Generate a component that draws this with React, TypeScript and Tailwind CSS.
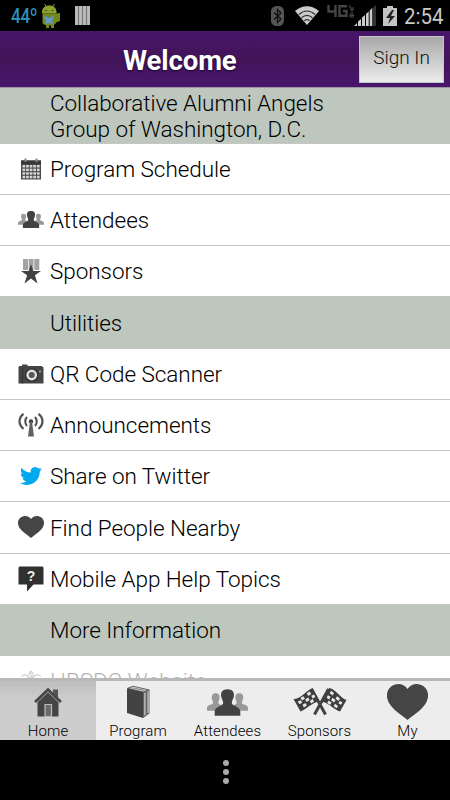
import React from 'react';
import { clsx } from 'clsx';

const CalendarIcon = () => (
    <svg viewBox="0 0 26 26" className="h-[26px] w-[26px]">
        <path d="M3 4.500h20V23.500H3z" fill="#4a4a4a" />
        <path d="M3 4.500h20v3.700H3z" fill="#383838" />
        <path d="M6.500 2.500h2v3.500h-2zM17.500 2.500h2v3.500h-2z" fill="#858585" />
        {[9, 12.6, 16.2, 19.8].map((y) =>
            [4.5, 8.1, 11.7, 15.3, 18.9].map((x) => (
                <rect key={`${x}-${y}`} x={x} y={y} width="2.7" height="2.5" fill="#d6d6d6" />
            ))
        )}
    </svg>
);

const PeopleIcon = ({ className }: { className: string }) => (
    <svg viewBox="0 0 40 26" className={className}>
        <g fill="#999">
            <path d="M8.500 4c3.500 0 4.300 2.600 3.600 5.800-.3 1.500-1.100 2.400-1.100 3.400 0 1.500 4 1.800 4 4.500V21H0v-2.700c0-3.500 6-2.900 6-5.100 0-1.100-.8-1.900-1.100-3.400C4.200 6.600 5 4 8.500 4z" />
            <path d="M31.500 4c3.500 0 4.300 2.600 3.600 5.800-.3 1.500-1.100 2.400-1.100 3.400 0 2.200 6 1.600 6 5.100V21H25v-3.300c0-2.700 4-3 4-4.500 0-1-.8-1.900-1.100-3.400C27.200 6.600 28 4 31.500 4z" />
        </g>
        <path
            d="M20 0c5 0 7 3 6.100 7.500-.4 2.400-1.900 3.700-1.900 6 0 3.200 8.300 3.300 8.300 8.300V26h-25v-4.200c0-5 8.300-5.100 8.300-8.300 0-2.300-1.500-3.600-1.900-6C13 3 15 0 20 0z"
            fill="#424242"
        />
    </svg>
);

const MedalIcon = () => (
    <svg viewBox="0 0 26 26" className="h-[26px] w-[26px]">
        <path d="M5 1h5v11H5zM10.700 1h4.800v11h-4.800zM16.300 1h5v11h-5z" fill="#a3a3a3" />
        <path d="M13 6l2.300 7h7.700l-6.100 4.300 2.600 8.200-6.500-5-6.500 5 2.600-8.200L3 13h7.700z" fill="#424242" />
    </svg>
);

const CameraIcon = () => (
    <svg viewBox="0 0 26 26" className="h-[26px] w-[26px]">
        <path d="M.500 6l1-1H4V3.500h5l1 1.500h13.500l2 1.400V22.500H.500z" fill="#454545" />
        <path d="M4.500 7v15.500" stroke="#303030" />
        <circle cx="13.700" cy="14" r="6.700" fill="#2e2e2e" />
        <circle cx="13.700" cy="14" r="4.200" fill="#555" stroke="#e2e2e2" strokeWidth="2.400" />
        <circle cx="22" cy="10.500" r="1" fill="#aaa" />
    </svg>
);

const AntennaIcon = () => (
    <svg viewBox="0 0 26 26" className="h-[26px] w-[26px]" fill="none" stroke="#505050">
        <circle cx="13" cy="9.500" r="2.200" fill="#444" stroke="none" />
        <path d="M12 10h2l2 14.500h-6z" fill="#606060" stroke="none" />
        <path d="M9 5c-2.300 2.500-2.300 6.500 0 9M17 5c2.300 2.500 2.300 6.500 0 9" strokeWidth="2.100" />
        <path d="M5.500 1.800c-5.300 4.200-5.300 10.800 0 15M20.500 1.800c5.300 4.200 5.300 10.800 0 15" strokeWidth="2.200" />
    </svg>
);

const TwitterIcon = () => (
    <svg viewBox="0 0 24 24" className="h-[22px] w-[22px]">
        <path
            d="M23.950 4.570a10 10 0 0 1-2.820.770 4.960 4.960 0 0 0 2.160-2.720c-.950.550-2 .950-3.130 1.180a4.920 4.920 0 0 0-8.380 4.480C7.690 8.100 4.070 6.130 1.640 3.160a4.820 4.820 0 0 0-.670 2.470c0 1.710.870 3.210 2.190 4.100a4.900 4.900 0 0 1-2.230-.610v.060a4.920 4.920 0 0 0 3.950 4.830 5 5 0 0 1-2.210.080 4.940 4.940 0 0 0 4.600 3.420A9.870 9.870 0 0 1 0 19.540a13.990 13.990 0 0 0 7.550 2.210c9.050 0 14-7.500 14-13.980 0-.210 0-.420-.020-.630a9.940 9.940 0 0 0 2.460-2.550z"
            fill="#00a9ee"
        />
    </svg>
);

const HeartIcon = ({ className }: { className: string }) => (
    <svg viewBox="0 0 40 36" preserveAspectRatio="none" className={className}>
        <path
            d="M20 5C16-1.500 8-.8 4 2.500-1 6.500-1 13.500 2 19c3.500 6.500 11 11 18 17 7-6 14.500-10.500 18-17 3-5.500 3-12.500-2-16.500C32-.8 24-1.500 20 5z"
            fill="#454545"
        />
    </svg>
);

const HelpIcon = () => (
    <svg viewBox="0 0 26 26" className="h-[26px] w-[26px]">
        <path d="M1.500.500h23l1 1v17h-10L9 25.500v-7H.500v-17z" fill="#303030" />
        <text x="13" y="14.500" textAnchor="middle" fontSize="14" fontWeight="700" fontFamily="Liberation Sans, sans-serif" fill="#eee">
            ?
        </text>
    </svg>
);

const GearIcon = () => (
    <svg viewBox="0 0 26 26" className="h-[26px] w-[26px]" fill="none" stroke="#777" strokeWidth="1.200">
        <path d="M3 8.500l4-2 3 2 1.500-4L13 3l1.500 1.500 1.500 4 3-2 4 2M13 3v7M9 8l3 3 3-3" />
        <circle cx="13" cy="15" r="6" />
    </svg>
);

const HomeIcon = () => (
    <svg viewBox="0 0 28 30" className="h-[30px] w-[28px]">
        <path d="M19 2.500h5V12h-5z" fill="#555" />
        <path d="M3.500 14L14 4l10.500 10v15.500h-21z" fill="#454545" />
        <path d="M2 16.500L14 5l12 11.500" fill="none" stroke="#a5a5a5" strokeWidth="1" />
        <path d="M1 15L14 2.500 27 15" fill="none" stroke="#484848" strokeWidth="2.600" />
        <path d="M11 29.500V17.500h6.500v12z" fill="#6b6b6b" stroke="#bbb" strokeWidth="1.200" />
    </svg>
);

const BookIcon = () => (
    <svg viewBox="0 0 24 34" className="h-[34px] w-[24px]">
        <path d="M1 3L7 .800 23.500 4.500v24L17 33z" fill="#636363" />
        <path d="M3.500 3.200L7.500 1.800 21 5l-4 1.500z" fill="#dcdcdc" />
        <path d="M5.500 3.300l2.500-.8L19.500 5l-2 .8z" fill="#8b8b8b" />
        <path d="M18.300 8l1.200-.7v22.500l-1.200.9zM21.500 6.300l1.200-.6v22l-1.200.9z" fill="#cfcfcf" />
        <path d="M1 3.500l16 3.500v26L1 28z" fill="#434343" />
    </svg>
);

const FlagsIcon = () => (
    <svg viewBox="0 0 54 28" className="h-[28px] w-[54px]">
        <path d="M18.500 1l14 25.500M35.500 1L21.500 26.500" stroke="#424242" strokeWidth="3" />
        <path d="M19.500 0l6.500 14c-5-1-11 6-18.500 9.500L.500 11C8 11 12 3.500 19.500 0zM36 0l-7 14c5-.5 11 7 18 9.500L53.500 12C47 10 43.500 1.500 36 0z" fill="#3e3e3e" />
        <g fill="#e9e9e9">
            <path d="M13.800 5.300l3-1.900 1.400 2.600-3 1.900zM7.500 9.800l3-1.600 1.400 2.600-3 1.600zM18.300 7.800l2.700-1.300 1.300 2.500-2.600 1.500zM12.200 11.500l3-2 1.400 2.600-3 2zM4.800 13.500l3-1.200 1.400 2.600-3 1.200zM9.500 16.800l3-1.900 1.300 2.600-2.900 1.900zM16.800 13l2.900-1.900 1.300 2.400-2.800 1.900z" />
            <path d="M41 5l-3-2.200-1.300 2.500 3 2.300zM47 10.500l-3-2.300-1.400 2.600 3 2.200zM37.500 8.600l-2.600-1.300-1.300 2.500 2.700 1.600zM42.500 12l-3-2.300-1.400 2.600 3 2.300zM49.500 14.200l-2.700-1.200-1.400 2.600 2.700 1.200zM45 18l-3-2.300-1.300 2.600 3 2zM38.500 14.500l-2.900-1.900-1.300 2.400 2.800 1.900z" />
        </g>
    </svg>
);

const AndroidIcon = () => (
    <svg viewBox="0 0 20 26" className="h-[26px] w-[20px]">
        <path d="M3.500 1L6 4.500M13.500 1l-2 3.500" stroke="#8a9c24" />
        <path d="M1 10.500C.500 5 4 2.500 8.200 2.500s7.800 2.500 7.300 8z" fill="#8da32b" />
        <path d="M1.500 10.500h13.500v9c0 4-13.500 4-13.500 0z" fill="#74891e" />
        <path d="M14.500 10.500l4.500-.5v8l-4 1.500zM5 20h3v5H5zM10 20h3v5h-3z" fill="#71861c" />
        <path d="M3.500 13l4.500 2 4.500-2v3.500l-2 1 2 4-4.500-1.500-4 1 1-4-2-2z" fill="#6497ce" />
        <circle cx="5" cy="7.500" r=".8" fill="#333" />
        <circle cx="11.500" cy="7.500" r=".8" fill="#333" />
    </svg>
);

const StatusBar = () => (
    <div className="flex h-[31px] shrink-0 items-center bg-black pl-[11px] pr-[7px]">
        <span className="w-[30px] origin-left scale-x-[0.81] whitespace-nowrap pt-[2px] text-[21px] font-medium leading-none tracking-[-0.3px] text-[#2d8fb9]">
            44º
        </span>
        <AndroidIcon />
        <svg viewBox="0 0 15 19" className="ml-[14px] h-[19px] w-[15px]">
            <path d="M0 0h15v19H0z" fill="#777" />
            <path d="M1.500 0v19M5.500 0v19M9.500 0v19M13.500 0v19" stroke="#bcbcbc" strokeWidth="2.800" />
        </svg>
        <div className="flex-1" />
        <svg viewBox="0 0 13 20" className="h-[20px] w-[13px]">
            <rect width="13" height="20" rx="5.500" fill="#555" />
            <path d="M3 6.500l7 6.500-3.500 3.500v-13L10 7l-7 6.500" fill="none" stroke="#111" strokeWidth="1.300" />
        </svg>
        <svg viewBox="0 0 24 19" className="ml-[11px] h-[19px] w-[24px]" fill="none">
            <path d="M0 5c7-6.500 17-6.500 24 0L12 19z" fill="#cbcbcb" />
            <path d="M4 8.500c5-4.500 11-4.500 16 0M6.500 11.800c3.500-3 7.500-3 11 0M9.300 14.800c1.800-1.500 3.600-1.500 5.400 0" stroke="#333" strokeWidth="1.200" />
        </svg>
        <svg viewBox="0 0 50 21" className="ml-[8px] h-[21px] w-[50px]">
            <path d="M1.500 0v6.500h7M8.500 0v12M20 1.200h-7.500v9.600h7V6h-3.500" fill="none" stroke="#454545" strokeWidth="2.400" />
            <path d="M23 0v3h4M23 4.500h4M25 4.500v3.500M27 9h-4v3h4M23 10.500h4" fill="none" stroke="#4a4a4a" />
            <path d="M49 0v21h-3.500V3z" fill="#333" />
            <path d="M27 21l3-3v3zM31 21v-4.500l3-2.500V21zM35 21v-8.500l3-2.500V21zM39 21V9l2.700-2.500V21zM42.700 21V5.500L45.200 3v18z" fill="#ccc" />
        </svg>
        <svg viewBox="0 0 14 20" className="ml-[6px] h-[20px] w-[14px]">
            <path d="M4 0h6v2h4v18H0V2h4z" fill="#c4c4c4" />
            <path d="M9 4l-6 8h4l-2 6 7-8H8l3-6z" fill="#222" />
        </svg>
        <span className="ml-[7px] w-[39px] origin-left scale-x-[0.93] whitespace-nowrap pt-[2px] text-[22px] leading-none text-[#c9c9c9]">
            2:54
        </span>
    </div>
);

const Header = () => (
    <div className="flex h-[57px] shrink-0 items-center border-b border-[#9c96a4] bg-linear-to-b from-[#48166c] via-[#421458] to-[#48166c] pr-[6px]">
        <div className="flex-1 pl-[123px] pt-[3px] text-[27.500px] font-bold tracking-[-0.1px] text-white [text-shadow:0_1px_2px_#16082b]">
            Welcome
        </div>
        <button className="h-[47px] w-[85px] border border-[#c6c6c6] bg-linear-to-b from-[#a9a9a9] to-[#ececec] pb-px text-[19px] font-[350] text-[#101010]">
            Sign In
        </button>
    </div>
);

type Item = { label: string; icon?: React.ReactNode };

const items: Item[] = [
    { label: 'Program Schedule', icon: <CalendarIcon /> },
    { label: 'Attendees', icon: <PeopleIcon className="h-[17px] w-[26px]" /> },
    { label: 'Sponsors', icon: <MedalIcon /> },
    { label: 'Utilities' },
    { label: 'QR Code Scanner', icon: <CameraIcon /> },
    { label: 'Announcements', icon: <AntennaIcon /> },
    { label: 'Share on Twitter', icon: <TwitterIcon /> },
    { label: 'Find People Nearby', icon: <HeartIcon className="h-[22px] w-[26px]" /> },
    { label: 'Mobile App Help Topics', icon: <HelpIcon /> },
    { label: 'More Information' },
    { label: 'HBSDC Website', icon: <GearIcon /> },
];

const ListRow = ({ label, icon }: Item) => (
    <div
        className={clsx(
            'flex h-[51.25px] shrink-0 items-center border-b border-[#c6c6c6]',
            icon ? 'bg-white' : 'bg-[#bec7be]'
        )}
    >
        <div className="flex w-[50px] justify-center pl-[12px]">{icon}</div>
        <div className="whitespace-nowrap pt-[2px]">{label}</div>
    </div>
);

const tabs = [
    { label: 'Home', icon: <HomeIcon />, className: 'w-[96px] bg-linear-to-b from-[#bdbdbd] via-[#cdcdcd] via-30% to-[#cdcdcd]' },
    { label: 'Program', icon: <BookIcon />, className: 'w-[84px]' },
    { label: 'Attendees', icon: <PeopleIcon className="h-[27px] w-[41px]" />, className: 'w-[95px]' },
    { label: 'Sponsors', icon: <FlagsIcon />, className: 'w-[89px]' },
    { label: 'My', icon: <HeartIcon className="h-[36px] w-[41px]" />, className: 'w-[87px]' },
];

const TabBar = () => (
    <div className="flex h-[62px] shrink-0 overflow-hidden border-t-[3px] border-[#b8b8b8] bg-[#ededed]">
        {tabs.map((tab) => (
            <div key={tab.label} className={clsx('flex shrink-0 flex-col items-center', tab.className)}>
                <div className="flex h-[42px] shrink-0 items-center">{tab.icon}</div>
                <div className="text-[15px] font-[350] leading-[17px] tracking-[0.1px] text-black">{tab.label}</div>
            </div>
        ))}
    </div>
);

const App = () => (
    <div className="flex h-[800px] w-[450px] flex-col overflow-hidden bg-black font-[Roboto,sans-serif]">
        <StatusBar />
        <Header />
        <div className="relative flex min-h-0 flex-1 flex-col overflow-hidden bg-white text-[22.5px] font-[350] tracking-[-0.05px] text-black">
            <div className="h-[55.500px] shrink-0 border-b border-[#c6c6c6] bg-[#bec7be] pl-[50px] pt-[3px] leading-[25.500px]">
                Collaborative Alumni Angels
                <br />
                Group of Washington, D.C.
            </div>
            {items.map((item) => (
                <ListRow key={item.label} {...item} />
            ))}
            <div className="absolute inset-x-0 bottom-0 h-[20px] bg-linear-to-b from-white/60 to-white/70" />
        </div>
        <TabBar />
        <div className="flex h-[60px] shrink-0 flex-col items-center justify-center gap-[3px] pl-px pt-[4px]">
            <span className="h-[6px] w-[6px] rounded-full bg-[#aaa]" />
            <span className="h-[6px] w-[6px] rounded-full bg-[#aaa]" />
            <span className="h-[6px] w-[6px] rounded-full bg-[#aaa]" />
        </div>
    </div>
);

export default App;
